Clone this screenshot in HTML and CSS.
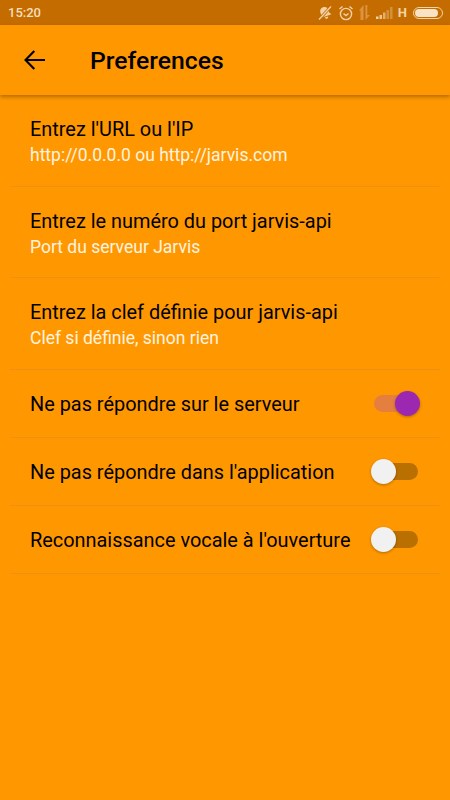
FILE: index.html
```html
<!DOCTYPE html>
<html lang="fr">
<head>
<meta charset="utf-8">
<title>Preferences</title>
<link rel="stylesheet" href="styles.css">
</head>
<body>
<div class="status">
  <span class="time">15:20</span>
  <div class="status-icons">
    <svg class="ic-dnd" width="16" height="16" viewBox="0 0 16 16"><g transform="rotate(-20 8 8)"><path d="M8 2c2.800 0 4.200 2.100 4.200 4.400v2.800l1.500 2.100H2.300l1.500-2.100V6.400C3.800 4.100 5.200 2 8 2z" fill="#f3d3a6"/><path d="M6.300 12.300h3.400a1.700 1.700 0 0 1-3.400 0z" fill="#f3d3a6"/></g><path d="M2 14.500 14 1.500" stroke="#c46c00" stroke-width="3"/><path d="M2 14.500 14 1.500" stroke="#f3d3a6" stroke-width="1.300"/></svg>
    <svg class="ic-alarm" width="16" height="16" viewBox="0 0 16 16" fill="none" stroke="#f3d3a6" stroke-width="1.400"><circle cx="8" cy="9" r="5.600"/><path d="M5.500 8.500 8 10.500l2.500-2M1.500 4 4.500 1.500M14.500 4 11.500 1.500"/></svg>
    <svg class="ic-data" width="11" height="15" viewBox="0 0 11 15" fill="#dc9440"><path d="M1.500 15V5.500H0L4.500 0v15zM6.500 0h1.800v10H11l-4.500 5z"/></svg>
    <svg class="ic-signal" width="17" height="12" viewBox="0 0 17 12"><rect x="0" y="9.500" width="2.500" height="2.500" fill="#f3d3a6"/><rect x="3.500" y="8" width="2.500" height="4" fill="#ecc48e"/><rect x="7" y="5.500" width="2.500" height="6.500" fill="#e3ae6c"/><rect x="10.500" y="3" width="2.500" height="9" fill="#d4913c"/><rect x="14" y="0" width="2.500" height="12" fill="#d4913c"/></svg>
    <span class="net">H</span>
    <div class="battery"><div class="battery-fill"></div></div>
  </div>
</div>
<header class="bar">
  <svg class="back" width="30" height="30" viewBox="0 0 30 30" fill="none" stroke="#000" stroke-width="2.100"><path d="M25 15H6.500M14.300 5.900 5.500 15l8.800 9.100"/></svg>
  <h1 class="title">Preferences</h1>
</header>
<main class="list">
  <div class="row row-text">
    <div class="label">Entrez l'URL ou l'IP</div>
    <div class="sub">http://0.0.0.0 ou http://jarvis.com</div>
  </div>
  <div class="row row-text">
    <div class="label">Entrez le numéro du port jarvis-api</div>
    <div class="sub">Port du serveur Jarvis</div>
  </div>
  <div class="row row-text">
    <div class="label">Entrez la clef définie pour jarvis-api</div>
    <div class="sub">Clef si définie, sinon rien</div>
  </div>
  <div class="row row-switch">
    <div class="label">Ne pas répondre sur le serveur</div>
    <div class="switch on"><div class="track"></div><div class="thumb"></div></div>
  </div>
  <div class="row row-switch">
    <div class="label">Ne pas répondre dans l'application</div>
    <div class="switch"><div class="track"></div><div class="thumb"></div></div>
  </div>
  <div class="row row-switch">
    <div class="label">Reconnaissance vocale à l'ouverture</div>
    <div class="switch"><div class="track"></div><div class="thumb"></div></div>
  </div>
</main>
</body>
</html>
```
FILE: styles.css
```css
* { box-sizing: border-box; }
html, body { margin: 0; height: 100%; }
body {
  width: 450px;
  height: 800px;
  overflow: hidden;
  background: #ff9800;
  font-family: Roboto, "Liberation Sans", sans-serif;
  color: #000;
}
.status {
  height: 25px;
  background: #c46c00;
  display: flex;
  align-items: center;
  justify-content: space-between;
  padding: 0 7px 0 8px;
}
.time {
  font-size: 13px;
  font-weight: 500;
  color: #f6dfbf;
}
.status-icons {
  display: flex;
  align-items: center;
}
.ic-dnd { margin-right: 5px; }
.ic-alarm { margin-right: 5px; }
.ic-data { margin-right: 6px; }
.ic-signal { margin-right: 5px; }
.net {
  font-size: 13px;
  font-weight: 700;
  color: #f3d3a6;
  margin-right: 6px;
}
.battery {
  width: 30px;
  height: 12px;
  border: 1px solid #f3d3a6;
  border-radius: 6px;
  padding: 1px;
}
.battery-fill {
  height: 100%;
  width: 88%;
  background: #f8e3c6;
  border-radius: 4px;
}
.bar {
  height: 70px;
  background: #ff9800;
  display: flex;
  align-items: center;
  padding-left: 20px;
  box-shadow: 0 2px 4px rgba(0, 0, 0, .3);
}
.back { flex: none; }
.title {
  margin: 0 0 0 40px;
  font-size: 24.750px;
  font-weight: 500;
  color: #000;
}
.list { padding: 0 10px; }
.row {
  border-bottom: 1px solid #ee9010;
  padding: 0 20px;
}
.row-text {
  height: 91.500px;
  display: flex;
  flex-direction: column;
  justify-content: center;
  padding-top: 4px;
}
.row-switch {
  height: 68px;
  display: flex;
  align-items: center;
  justify-content: space-between;
}
.row-switch .label { padding-top: 3px; }
.label {
  font-size: 19.900px;
  line-height: 26px;
  color: #000;
}
.sub {
  font-size: 17.500px;
  line-height: 24px;
  color: #fff3e0;
}
.switch {
  position: relative;
  width: 49px;
  height: 25px;
  display: flex;
  align-items: center;
  justify-content: center;
}
.track {
  width: 44px;
  height: 17px;
  border-radius: 9px;
  background: #b97000;
}
.thumb {
  position: absolute;
  left: 0;
  top: 0;
  width: 25px;
  height: 25px;
  border-radius: 50%;
  background: #f1f1f1;
  box-shadow: 0 1px 3px rgba(0, 0, 0, .3);
}
.switch.on .track { background: #e57f3f; }
.switch.on .thumb { left: 24px; background: #9c27b0; }
```
